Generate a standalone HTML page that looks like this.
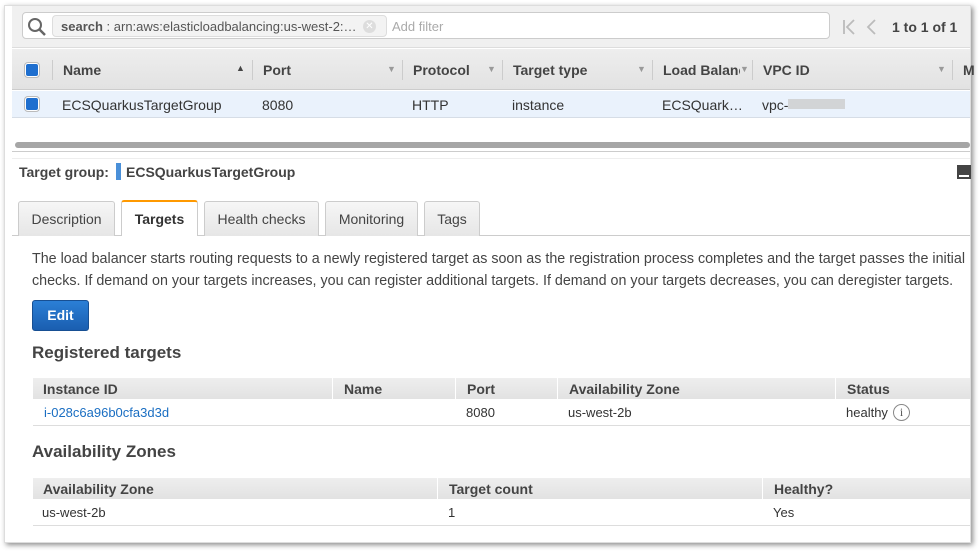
<!DOCTYPE html>
<html><head><meta charset="utf-8"><style>
*{box-sizing:border-box;margin:0;padding:0}
body{width:980px;height:551px;background:#fff;font-family:"Liberation Sans",Arial,sans-serif;position:relative;overflow:hidden;color:#333}
.a{position:absolute}
.win{left:4px;top:5px;width:967px;height:538px;border:1px solid #ddd;background:#fff;box-shadow:2px 2px 5px rgba(0,0,0,.45)}
.b{font-weight:bold}
.th{background:linear-gradient(#eee,#e2e2e2);font-weight:bold;font-size:14px;color:#444}
.sep{width:1px;background:#ccc}
.tab{top:201px;height:35px;border:1px solid #ccc;border-bottom:none;background:linear-gradient(#f6f6f6,#e6e6e6);font-size:14px;color:#444;text-align:center;line-height:34px;border-radius:3px 3px 0 0}
.cb{width:14px;height:14px;background:#1f6fcf;border:1px solid #fff;box-shadow:0 0 0 1px #bbb;border-radius:3px}
.f14{font-size:14px}
.f13{font-size:13px}
</style></head><body>
<div class="a win"></div>
<div class="a" style="left:12px;top:6px;width:958px;height:42px;background:#f0f0f0;border-bottom:1px solid #ddd"></div>
<div class="a" style="left:22px;top:12px;width:808px;height:27px;background:#fff;border:1px solid #ccc;border-radius:4px"></div>
<svg class="a" style="left:27px;top:17px" width="20" height="20"><circle cx="8" cy="8" r="6" fill="none" stroke="#666" stroke-width="2"/><line x1="12.5" y1="12.5" x2="18" y2="18" stroke="#666" stroke-width="2.5"/></svg>
<div class="a" style="left:52px;top:15px;width:335px;height:22px;background:#f3f3f3;border:1px solid #ddd;border-radius:4px"></div>
<div class="a f13" style="left:61px;top:19px;color:#555"><b>search</b> : arn:aws:elasticloadbalancing:us-west-2:…</div>
<div class="a" style="left:363px;top:20px;width:13px;height:13px;border-radius:50%;background:#ddd;color:#fff;font-size:10px;text-align:center;line-height:13px">✕</div>
<div class="a f13" style="left:392px;top:19px;color:#aaa">Add filter</div>
<svg class="a" style="left:842px;top:18px" width="40" height="18"><path d="M2 2V16M12 2L5 9L12 16" fill="none" stroke="#bbb" stroke-width="1.8"/><path d="M33 2L26 9L33 16" fill="none" stroke="#bbb" stroke-width="1.8"/></svg>
<div class="a b f14" style="left:892px;top:19px;color:#444">1 to 1 of 1</div>
<div class="a th" style="left:12px;top:49px;width:958px;height:41px;border-bottom:1px solid #ccc"></div>
<div class="a cb" style="left:25px;top:63px"></div>
<div class="a sep" style="left:52px;top:60px;height:20px"></div>
<div class="a th" style="left:63px;top:62px;background:none">Name</div>
<div class="a" style="left:236px;top:63px;font-size:9px;color:#444">▲</div>
<div class="a sep" style="left:252px;top:60px;height:20px"></div>
<div class="a th" style="left:263px;top:62px;background:none">Port</div>
<div class="a" style="left:387px;top:64px;font-size:9px;color:#999">▼</div>
<div class="a sep" style="left:402px;top:60px;height:20px"></div>
<div class="a th" style="left:413px;top:62px;background:none">Protocol</div>
<div class="a" style="left:487px;top:64px;font-size:9px;color:#999">▼</div>
<div class="a sep" style="left:502px;top:60px;height:20px"></div>
<div class="a th" style="left:513px;top:62px;background:none">Target type</div>
<div class="a" style="left:637px;top:64px;font-size:9px;color:#999">▼</div>
<div class="a sep" style="left:652px;top:60px;height:20px"></div>
<div class="a th" style="left:663px;top:62px;background:none;width:77px;overflow:hidden;white-space:nowrap">Load Balancer</div>
<div class="a" style="left:740px;top:64px;font-size:9px;color:#999">▼</div>
<div class="a sep" style="left:752px;top:60px;height:20px"></div>
<div class="a th" style="left:763px;top:62px;background:none">VPC ID</div>
<div class="a" style="left:937px;top:64px;font-size:9px;color:#999">▼</div>
<div class="a sep" style="left:952px;top:60px;height:20px"></div>
<div class="a th" style="left:963px;top:62px;background:none">M</div>
<div class="a" style="left:12px;top:91px;width:958px;height:27px;background:#eaf2fc;border-bottom:1px solid #d6dde6"></div>
<div class="a cb" style="left:25px;top:97px"></div>
<div class="a f14" style="left:62px;top:97px">ECSQuarkusTargetGroup</div>
<div class="a f14" style="left:262px;top:97px">8080</div>
<div class="a f14" style="left:412px;top:97px">HTTP</div>
<div class="a f14" style="left:512px;top:97px">instance</div>
<div class="a f14" style="left:662px;top:97px">ECSQuark…</div>
<div class="a f14" style="left:762px;top:97px">vpc-</div>
<div class="a" style="left:788px;top:99px;width:57px;height:10px;background:#ccc;opacity:.8"></div>
<div class="a" style="left:15px;top:142px;width:955px;height:6px;background:#a6a6a6;border-radius:3px"></div>
<div class="a" style="left:12px;top:151px;width:958px;height:1px;background:#ccc"></div>
<div class="a" style="left:12px;top:158px;width:958px;height:1px;background:#eee"></div>
<div class="a" style="left:957px;top:165px;width:14px;height:14px;background:#444"></div>
<div class="a" style="left:959px;top:175px;width:10px;height:2px;background:#fff"></div>
<div class="a b f14" style="left:19px;top:164px;color:#444">Target group:</div>
<div class="a" style="left:116px;top:163px;width:5px;height:17px;background:#4a90d9"></div>
<div class="a b f14" style="left:126px;top:164px;color:#444">ECSQuarkusTargetGroup</div>
<div class="a" style="left:12px;top:235px;width:958px;height:1px;background:#ccc"></div>
<div class="a tab" style="left:18px;width:97px">Description</div>
<div class="a tab b" style="left:121px;width:77px;height:36px;background:#fff;border-top:2px solid #f90;top:200px;color:#333">Targets</div>
<div class="a tab" style="left:204px;width:115px">Health checks</div>
<div class="a tab" style="left:325px;width:93px">Monitoring</div>
<div class="a tab" style="left:424px;width:56px">Tags</div>
<div class="a" style="left:32px;top:248px;line-height:22px;width:950px;white-space:nowrap;color:#444;font-size:14.3px">The load balancer starts routing requests to a newly registered target as soon as the registration process completes and the target passes the initial<br>checks. If demand on your targets increases, you can register additional targets. If demand on your targets decreases, you can deregister targets.</div>
<div class="a b" style="left:32px;top:300px;width:57px;height:31px;background:linear-gradient(#2b7fd6,#1a5eb0);border:1px solid #174f93;border-radius:3px;color:#fff;font-size:14px;text-align:center;line-height:29px">Edit</div>
<div class="a b" style="left:32px;top:343px;font-size:17px;color:#444">Registered targets</div>
<div class="a th" style="left:33px;top:378px;width:937px;height:21px"></div>
<div class="a th" style="left:43px;top:381px;background:none">Instance ID</div>
<div class="a sep" style="left:332px;top:378px;height:21px;background:#fff"></div>
<div class="a th" style="left:344px;top:381px;background:none">Name</div>
<div class="a sep" style="left:455px;top:378px;height:21px;background:#fff"></div>
<div class="a th" style="left:467px;top:381px;background:none">Port</div>
<div class="a sep" style="left:557px;top:378px;height:21px;background:#fff"></div>
<div class="a th" style="left:569px;top:381px;background:none">Availability Zone</div>
<div class="a sep" style="left:835px;top:378px;height:21px;background:#fff"></div>
<div class="a th" style="left:847px;top:381px;background:none">Status</div>
<div class="a f13" style="left:44px;top:405px;color:#1a6ec2">i-028c6a96b0cfa3d3d</div>
<div class="a f13" style="left:466px;top:405px">8080</div>
<div class="a f13" style="left:568px;top:405px">us-west-2b</div>
<div class="a f13" style="left:846px;top:405px">healthy</div>
<div class="a" style="left:893px;top:404px;width:17px;height:17px;border:1px solid #888;border-radius:50%;font-size:12px;text-align:center;line-height:15px;color:#555;font-family:'Liberation Serif',serif">i</div>
<div class="a" style="left:33px;top:425px;width:937px;height:1px;background:#ddd"></div>
<div class="a b" style="left:32px;top:442px;font-size:17px;color:#444">Availability Zones</div>
<div class="a th" style="left:33px;top:478px;width:937px;height:21px"></div>
<div class="a th" style="left:43px;top:481px;background:none">Availability Zone</div>
<div class="a sep" style="left:437px;top:478px;height:21px;background:#fff"></div>
<div class="a th" style="left:449px;top:481px;background:none">Target count</div>
<div class="a sep" style="left:762px;top:478px;height:21px;background:#fff"></div>
<div class="a th" style="left:774px;top:481px;background:none">Healthy?</div>
<div class="a f13" style="left:42px;top:505px">us-west-2b</div>
<div class="a f13" style="left:448px;top:505px">1</div>
<div class="a f13" style="left:773px;top:505px">Yes</div>
<div class="a" style="left:33px;top:525px;width:937px;height:1px;background:#ddd"></div>
</body></html>
